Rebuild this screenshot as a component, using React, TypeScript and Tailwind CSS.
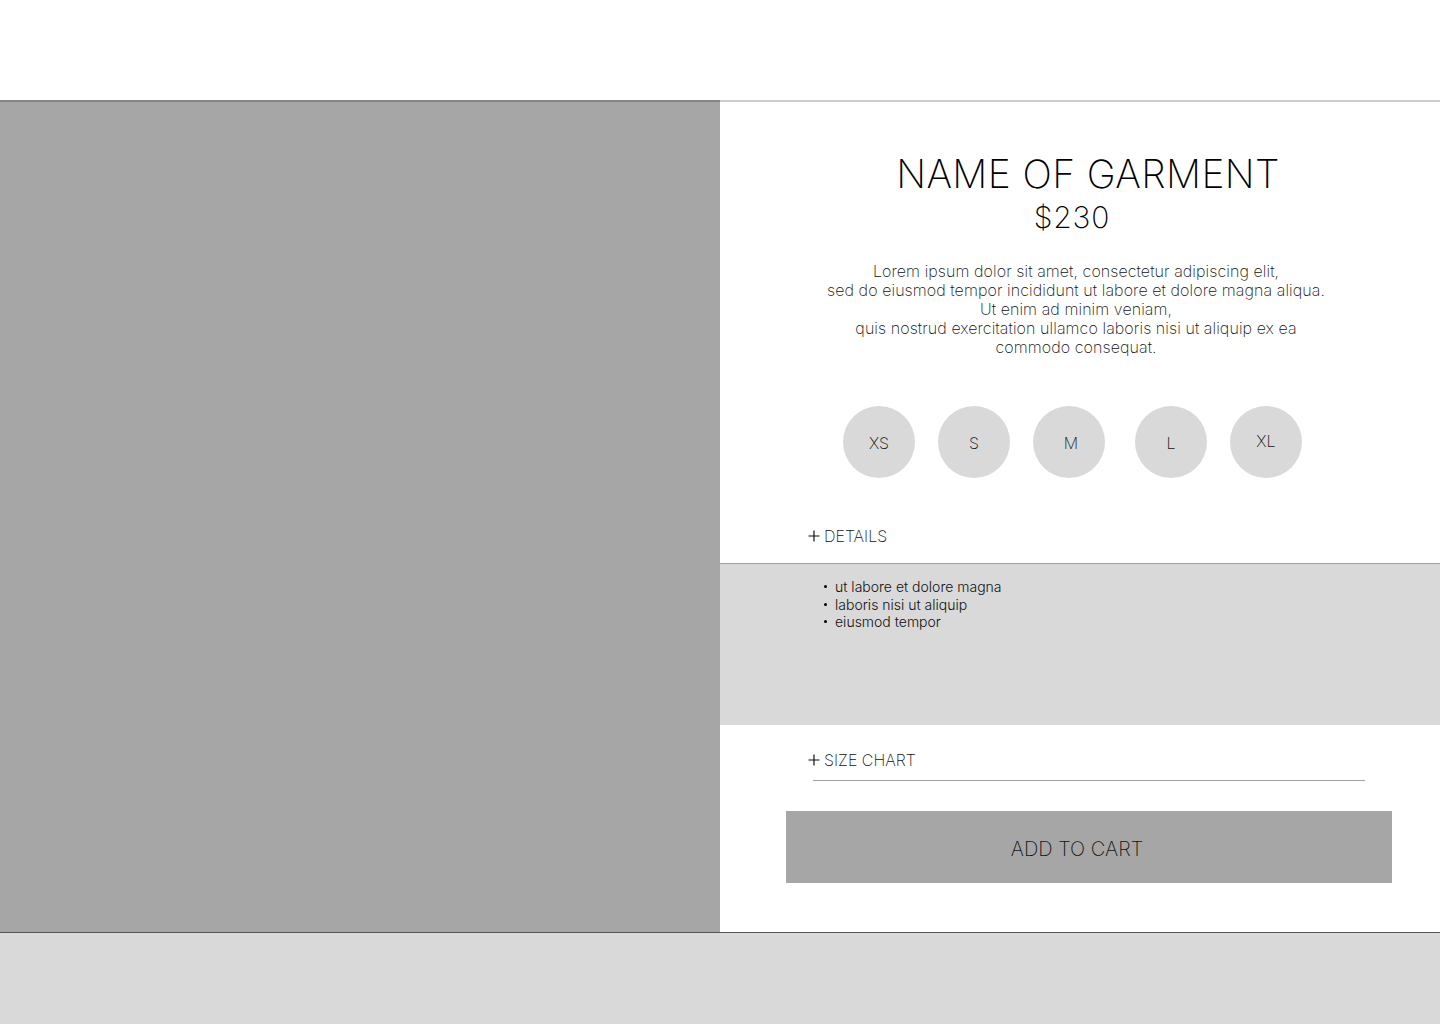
import React from "react";

const sizes = [
  { label: "XS", ml: "ml-[123px]", off: "translate-y-[1px]" },
  { label: "S", ml: "ml-[23px]", off: "translate-y-[1px]" },
  { label: "M", ml: "ml-[23px]", off: "translate-y-[1px] translate-x-[2px]" },
  { label: "L", ml: "ml-[30px]", off: "translate-y-[1px]" },
  { label: "XL", ml: "ml-[23px]", off: "-translate-y-[1px]" },
];

function Plus() {
  return (
    <svg width="12" height="12" viewBox="0 0 12 12" className="mr-[4px]">
      <path d="M6 0.5V11.5M0.5 6H11.5" stroke="#111" strokeWidth="1.2" fill="none" />
    </svg>
  );
}

export default function App() {
  return (
    <div className="w-[1440px] h-[1024px] bg-white overflow-hidden font-['Inter',sans-serif] text-[#222]">
      <header className="relative z-10 h-[100px] bg-white shadow-[0_2px_0_rgba(0,0,0,0.2)]" />
      <main className="flex h-[832px]">
        <div className="w-[720px] h-full bg-[#a6a6a6]" />
        <div className="flex-1 flex flex-col bg-white">
          <h1 className="pt-[50px] pl-[16px] text-center text-[39px] leading-[47px] font-extralight tracking-[0.01em] text-black">
            NAME OF GARMENT
          </h1>
          <div className="mt-[2px] pr-[16px] text-center text-[30px] leading-[36px] font-extralight tracking-[0.03em] text-black">
            $230
          </div>
          <p className="mt-[27px] pr-[8px] text-center text-[16px] leading-[19px] font-extralight tracking-[0.08px] text-[#111]">
            Lorem ipsum dolor sit amet, consectetur adipiscing elit,
            <br />
            sed do eiusmod tempor incididunt ut labore et dolore magna aliqua.
            <br />
            Ut enim ad minim veniam,
            <br />
            quis nostrud exercitation ullamco laboris nisi ut aliquip ex ea
            <br />
            commodo consequat.
          </p>
          <div className="mt-[49px] flex">
            {sizes.map((s) => (
              <div
                key={s.label}
                className={`${s.ml} w-[72px] h-[72px] rounded-full bg-[#d9d9d9] flex items-center justify-center text-[16px] font-extralight text-[#111]`}
              >
                <span className={s.off}>{s.label}</span>
              </div>
            ))}
          </div>
          <div className="mt-[48px] pl-[88px] flex items-center h-[20px] text-[16px] font-extralight text-[#111]">
            <Plus />
            <span>DETAILS</span>
          </div>
          <div className="mt-[17px] h-[162px] bg-[#d9d9d9] border-t border-[#a0a0a0] pt-[14px] pl-[104px]">
            {["ut labore et dolore magna", "laboris nisi ut aliquip", "eiusmod tempor"].map((t) => (
              <div key={t} className="flex items-center h-[17.5px] text-[14px] font-light text-[#111]">
                <span className="w-[3px] h-[3px] rounded-full bg-black mr-[8px]" />
                <span>{t}</span>
              </div>
            ))}
          </div>
          <div className="mt-[25px] pl-[88px] flex items-center h-[20px] text-[16px] font-extralight text-[#111]">
            <Plus />
            <span>SIZE CHART</span>
          </div>
          <div className="mt-[10px] ml-[93px] w-[552px] h-px bg-[#a0a0a0]" />
          <button className="mt-[30px] ml-[66px] w-[606px] h-[72px] bg-[#a6a6a6] flex items-center justify-center pr-[24px] pt-[4px] text-[20px] font-extralight text-[#111]">
            ADD TO CART
          </button>
        </div>
      </main>
      <footer className="h-[92px] bg-[#d9d9d9] border-t border-[#555]" />
    </div>
  );
}
